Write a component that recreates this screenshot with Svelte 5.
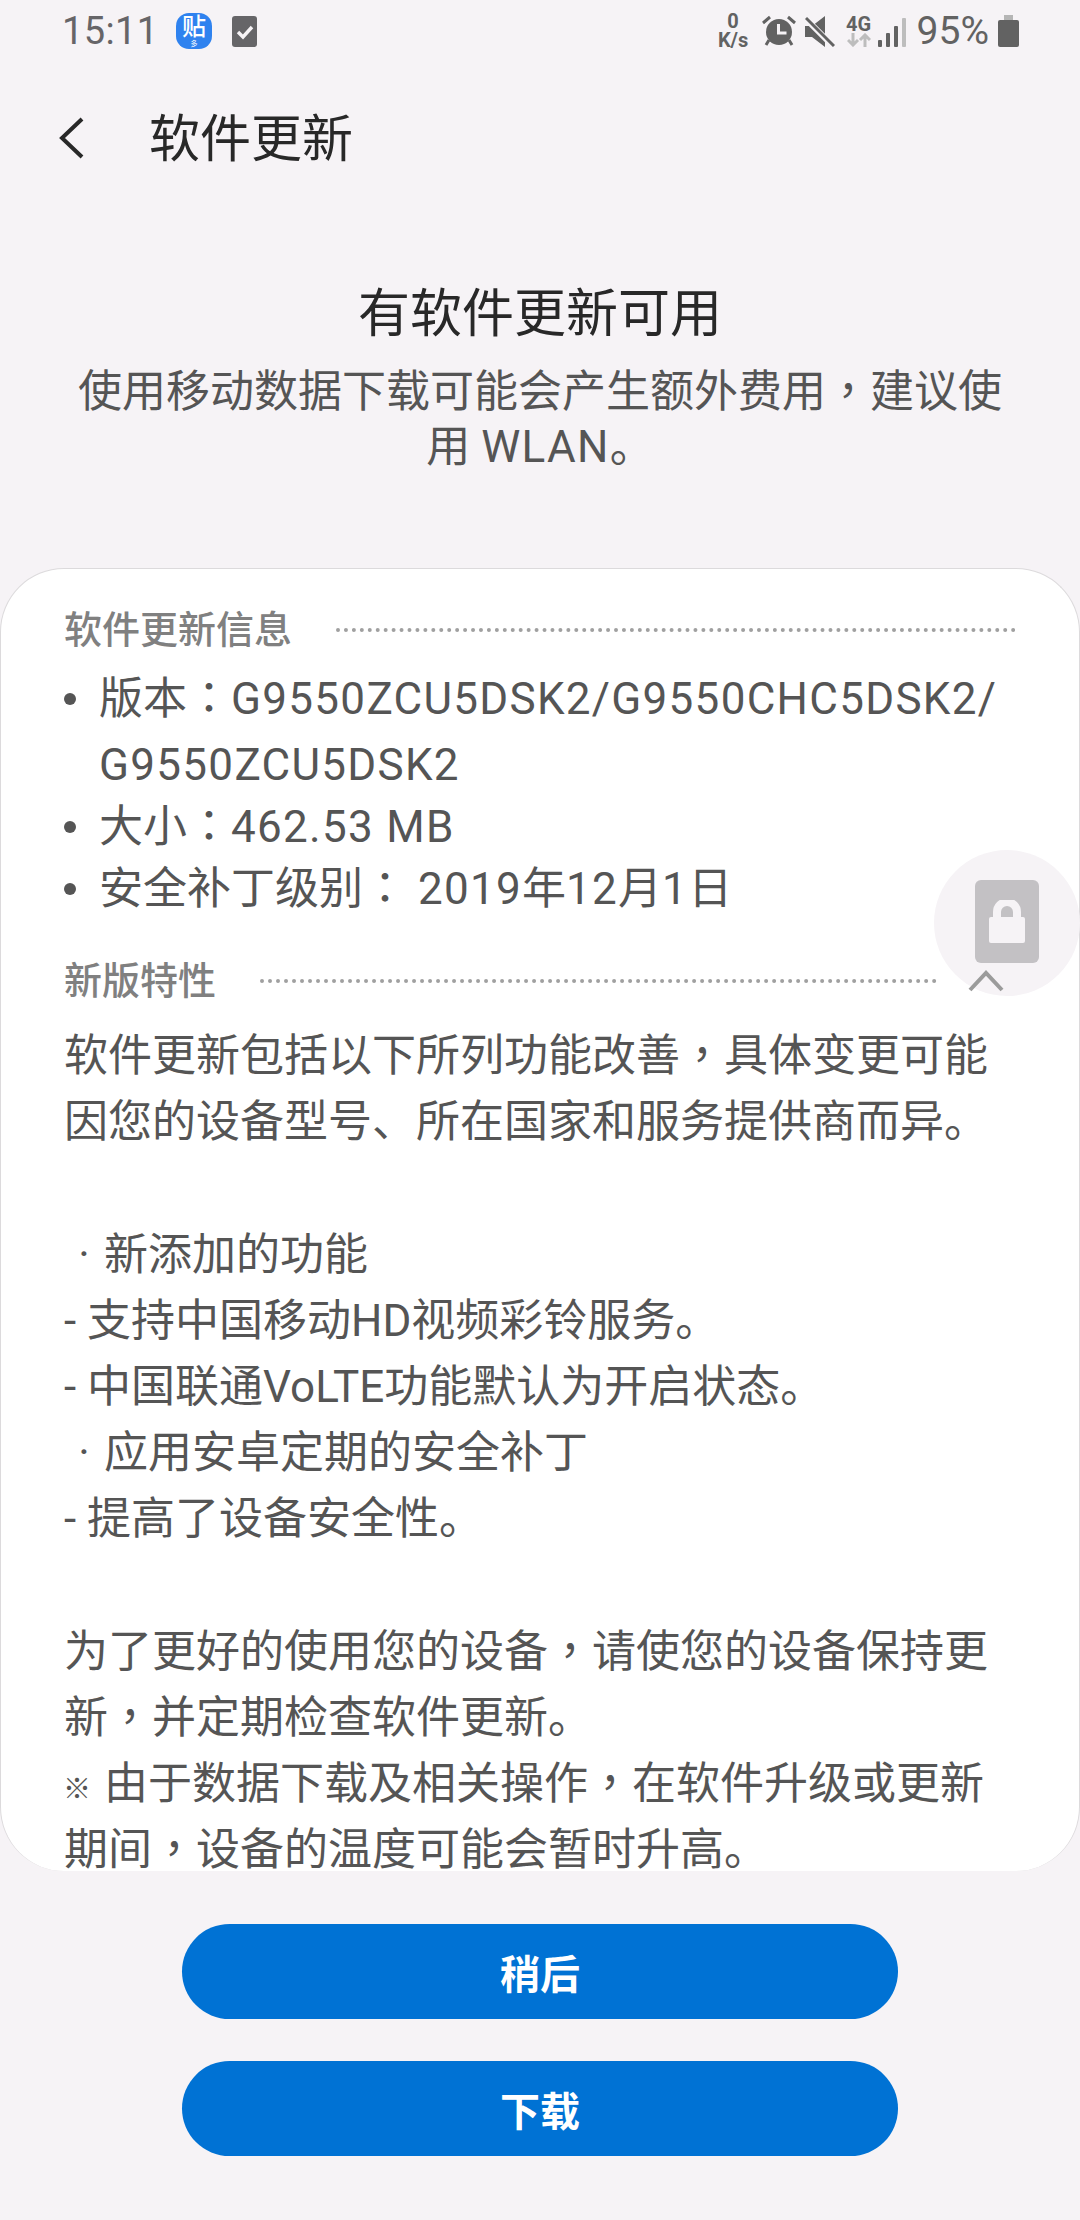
<script>
  const features = [
    '软件更新包括以下所列功能改善<span class="c">，</span>具体变更可能因您的设备型号、所在国家和服务提供商而异。',
    '',
    '<span class="dot">·</span>新添加的功能',
    '- 支持中国移动HD视频彩铃服务。',
    '- 中国联通VoLTE功能默认为开启状态。',
    '<span class="dot">·</span>应用安卓定期的安全补丁',
    '- 提高了设备安全性。',
    '',
    '为了更好的使用您的设备<span class="c">，</span>请使您的设备保持更新<span class="c">，</span>并定期检查软件更新。',
    '<span class="ref">※</span> 由于数据下载及相关操作<span class="c">，</span>在软件升级或更新期间<span class="c">，</span>设备的温度可能会暂时升高。'
  ];
</script>

<div class="screen">
  <div class="status">
    <span class="time">15:11</span>
    <span class="app-badge">
      <span class="tie">贴</span>
      <span class="tie-sub">多</span>
    </span>
    <svg class="check" width="25" height="31" viewBox="0 0 25 31">
      <rect width="25" height="31" rx="3" fill="#666568" />
      <path d="M6 16l5 5 9-10" fill="none" stroke="#f6f3f6" stroke-width="3.4" />
    </svg>
    <span class="spacer"></span>
    <span class="speed"><b>0</b><b>K/s</b></span>
    <svg class="alarm" width="34" height="32" viewBox="0 0 34 32">
      <path d="M1 8l7-6M33 8l-7-6" stroke="#626262" stroke-width="3" fill="none" />
      <path d="M7 25l-3 5M27 25l3 5" stroke="#626262" stroke-width="3" fill="none" />
      <circle cx="17" cy="17" r="13" fill="#626262" />
      <path d="M16.5 9v9h8" stroke="#f6f3f6" stroke-width="3" fill="none" />
    </svg>
    <svg class="mute" width="30" height="31" viewBox="0 0 30 31">
      <path d="M0 10h7L20 0v31L7 21H0z" fill="#626262" />
      <path d="M1 3l27 27" stroke="#f6f3f6" stroke-width="6" />
      <path d="M1 2l28 28" stroke="#626262" stroke-width="3" />
    </svg>
    <span class="net">
      <b>4G</b>
      <svg width="24" height="14" viewBox="0 0 24 14">
        <path d="M6 0v12M1 7l5 5 5-5" fill="none" stroke="#bdbdbd" stroke-width="3" />
        <path d="M18 14V2M13 7l5-5 5 5" fill="none" stroke="#bdbdbd" stroke-width="3" />
      </svg>
    </span>
    <svg class="signal" width="28" height="29" viewBox="0 0 28 29">
      <rect x="0" y="22" width="4" height="7" rx="1" fill="#626262" />
      <rect x="8" y="15" width="4" height="14" rx="1" fill="#626262" />
      <rect x="16" y="8" width="4" height="21" rx="1" fill="#626262" />
      <rect x="24" y="0" width="4" height="29" rx="1" fill="#bdbdbd" />
    </svg>
    <span class="pct">95%</span>
    <svg class="battery" width="21" height="32" viewBox="0 0 21 32">
      <rect x="6" y="0" width="9" height="5" fill="#b5b5b5" />
      <rect x="0" y="5" width="21" height="27" rx="2" fill="#626262" />
    </svg>
  </div>

  <div class="toolbar">
    <svg width="26" height="42" viewBox="0 0 26 42">
      <path d="M23 2L3 21l20 19" fill="none" stroke="#282828" stroke-width="4" />
    </svg>
    <h1>软件更新</h1>
  </div>

  <div class="intro">
    <h2>有软件更新可用</h2>
    <p>使用移动数据下载可能会产生额外费用<span class="c">，</span>建议使用 <span class="l">WLAN</span>。</p>
  </div>

  <div class="card">
    <div class="section-head first">
      <span>软件更新信息</span>
      <i></i>
    </div>
    <ul>
      <li>版本<span class="c">：</span><span class="l">G9550ZCU5DSK2/G9550CHC5DSK2/<br />G9550ZCU5DSK2</span></li>
      <li>大小<span class="c">：</span><span class="l">462.53 MB</span></li>
      <li>安全补丁级别<span class="c">：</span> <span class="l">2019</span>年<span class="l">12</span>月<span class="l">1</span>日</li>
    </ul>
    <div class="section-head second">
      <span>新版特性</span>
      <i></i>
    </div>
    <div class="body">
      {#each features as line}
        <p>{@html line || '&nbsp;'}</p>
      {/each}
    </div>
  </div>

  <div class="actions">
    <button>稍后</button>
    <button>下载</button>
  </div>

  <div class="float">
    <div class="lock">
      <svg width="38" height="44" viewBox="0 0 38 44">
        <path d="M9 20V12a10 10 0 0 1 20 0v8" fill="none" stroke="#f6f3f6" stroke-width="8" />
        <rect x="1" y="17" width="36" height="26" rx="2" fill="#f6f3f6" />
      </svg>
    </div>
    <svg class="chev" width="36" height="22" viewBox="0 0 36 22">
      <path d="M2 20L18 3l16 17" fill="none" stroke="#9b9b9b" stroke-width="4" />
    </svg>
  </div>
</div>

<style>
  :global(body) {
    margin: 0;
    background: #f6f3f6;
  }

  .screen {
    position: relative;
    width: 1080px;
    height: 2220px;
    overflow: hidden;
    background: #f6f3f6;
    font-family: Roboto, "Noto Sans CJK SC", sans-serif;
    color: #555;
  }

  :global(.c) {
    font-family: "Noto Sans CJK TC", sans-serif;
    line-height: 0;
  }

  .l {
    letter-spacing: 1.3px;
  }

  :global(.ref) {
    display: inline-block;
    width: 30px;
    margin-left: -1px;
    font-size: 28px;
    font-weight: 700;
    line-height: 0;
  }

  .status {
    display: flex;
    align-items: center;
    height: 62px;
    padding: 0 61px 0 62px;
    box-sizing: border-box;
    color: #666568;
  }

  .time {
    font-size: 38px;
    letter-spacing: 0.4px;
    width: 114px;
  }

  .app-badge {
    position: relative;
    display: block;
    width: 36px;
    height: 36px;
    border-radius: 13px;
    background: #2f82ef;
    color: #fff;
    text-align: center;
    overflow: hidden;
  }

  .tie {
    display: block;
    font-size: 24px;
    line-height: 28px;
    font-weight: 500;
  }

  .tie-sub {
    position: absolute;
    left: 0;
    right: 0;
    bottom: 1px;
    font-size: 7px;
    line-height: 8px;
  }

  .check {
    margin-left: 20px;
  }

  .spacer {
    flex: 1;
  }

  .speed {
    display: flex;
    flex-direction: column;
    align-items: center;
    width: 33px;
    font-size: 20px;
    line-height: 19px;
    color: #626262;
  }

  .alarm {
    margin-left: 12px;
  }

  .mute {
    margin-left: 9px;
  }

  .net {
    display: flex;
    flex-direction: column;
    align-items: center;
    width: 24px;
    margin-left: 12px;
    font-size: 20px;
    line-height: 18px;
    color: #626262;
  }

  .signal {
    margin-left: 7px;
    margin-top: 3px;
  }

  .pct {
    margin-left: 11px;
    font-size: 39px;
    color: #626262;
  }

  .battery {
    margin-left: 9px;
  }

  .toolbar {
    display: flex;
    align-items: center;
    gap: 64px;
    height: 152px;
    padding-left: 59px;
  }

  .toolbar h1 {
    margin: 0 0 6px;
    font-size: 51px;
    font-weight: 400;
    color: #282828;
  }

  .intro {
    padding: 0 64px;
    text-align: center;
  }

  .intro h2 {
    margin: 66px 0 0;
    font-size: 52px;
    line-height: 70px;
    font-weight: 400;
    color: #282828;
  }

  .intro p {
    margin: 15px 0 0;
    font-size: 44px;
    line-height: 55px;
    color: #555;
  }

  .card {
    box-sizing: border-box;
    height: 1303px;
    margin-top: 93px;
    padding: 0 63px;
    background: #fff;
    border: 1px solid #dcdadc;
    border-bottom: 0;
    border-radius: 64px;
    overflow: hidden;
  }

  .section-head {
    display: flex;
    align-items: center;
    font-size: 38px;
    line-height: 50px;
    font-weight: 500;
    color: #808080;
  }

  .section-head i {
    flex: 1;
    margin-left: 44px;
    height: 0;
    border-top: 4px dotted #a0a0a0;
  }

  .section-head.first {
    margin-top: 36px;
  }

  .section-head.second {
    margin-top: 34px;
    margin-right: 79px;
  }

  ul {
    margin: 11px 0 0;
    padding: 0;
    list-style: none;
  }

  li {
    position: relative;
    padding-left: 35px;
    font-size: 44px;
    line-height: 66px;
  }

  li + li {
    margin-top: -4px;
  }

  li::before {
    content: "";
    position: absolute;
    left: 0;
    top: 27px;
    width: 12px;
    height: 12px;
    border-radius: 50%;
    background: #555;
  }

  .body {
    margin-top: 17px;
    font-size: 44px;
    line-height: 66.2px;
  }

  .body p {
    margin: 0;
  }

  :global(.dot) {
    display: inline-block;
    width: 40px;
    text-align: center;
    line-height: 0;
  }

  .actions {
    display: flex;
    flex-direction: column;
    align-items: center;
    gap: 42px;
    margin-top: 53px;
  }

  button {
    width: 716px;
    height: 95px;
    border: 0;
    border-radius: 48px;
    background: #0072d4;
    color: #fff;
    font-family: inherit;
    font-size: 40px;
    font-weight: 700;
  }

  .float {
    position: absolute;
    left: 934px;
    top: 850px;
    width: 146px;
    height: 146px;
    border-radius: 50%;
    background: #f6f3f6;
  }

  .lock {
    position: absolute;
    left: 41px;
    top: 30px;
    width: 64px;
    height: 83px;
    border-radius: 6px;
    background: #c3c1c4;
    display: flex;
    align-items: center;
    justify-content: center;
  }

  .chev {
    position: absolute;
    left: 34px;
    top: 120px;
  }
</style>
